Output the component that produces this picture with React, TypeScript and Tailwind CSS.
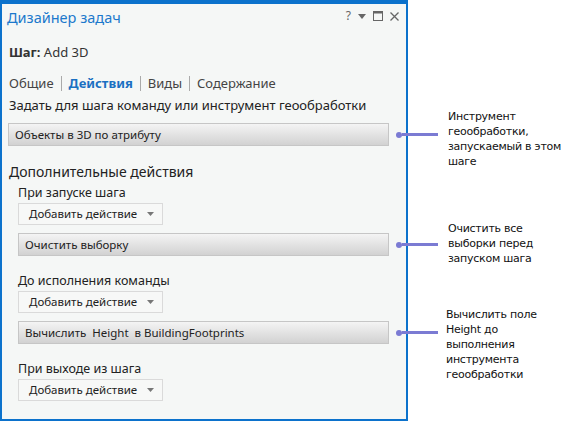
import { Fragment } from "react";

const ui = { fontFamily: '"Noto Sans", "Open Sans", sans-serif' };
const note = { fontFamily: '"DejaVu Sans", Verdana, sans-serif' };

function Connector() {
  // callout line that runs from the bar out to the note
  return (
    <div className="absolute left-full top-1/2 ml-[7px] flex w-[42px] -translate-y-1/2 items-center">
      <span className="h-[6px] w-[6px] rounded-full bg-[#7b7bd3]" />
      <span className="h-[3px] flex-1 bg-[#7b7bd3]" />
    </div>
  );
}

function Bar({ children, indent }: { children: React.ReactNode; indent?: boolean }) {
  return (
    <div className={`relative ${indent ? "ml-[16px]" : "ml-[6px]"} mr-[17px]`}>
      <div className="flex h-[23px] items-center border border-[#c6c6c6] bg-gradient-to-b from-[#f4f4f4] to-[#d2d2d2] px-[6px] text-[11.5px] text-[#222]">
        {children}
      </div>
      <Connector />
    </div>
  );
}

function AddAction() {
  return (
    <div className="ml-[16px] mt-[2px] flex h-[22px] w-[145px] items-center justify-between border border-[#dadada] bg-[#f7f8f7] pl-[10px] pr-[8px] text-[11.5px] text-[#222]">
      <span>Добавить действие</span>
      <svg width="7" height="4" viewBox="0 0 7 4">
        <path d="M0 0h7L3.5 4z" fill="#777" />
      </svg>
    </div>
  );
}

function SubLabel({ children }: { children: React.ReactNode }) {
  return <div className="ml-[16px] text-[12.5px] leading-[16px] text-[#222]">{children}</div>;
}

export default function App() {
  const tabs = ["Общие", "Действия", "Виды", "Содержание"];
  return (
    <div className="relative h-[423px] w-[573px] overflow-hidden bg-white" style={ui}>
      <div className="flex h-[421px] w-[408px] flex-col border-x-2 border-b-2 border-t-4 border-[#0c72cc] bg-[#f5f7f6]">
        <div className="flex items-start justify-between pl-[5px] pr-[7px] pt-[2px]">
          <div className="text-[14.5px] leading-[22px] text-[#1c79cc]">Дизайнер задач</div>
          <div className="mt-[3px] flex items-center gap-[7px] text-[#666]">
            <span className="text-[12px] leading-[14px]">?</span>
            <svg width="8" height="5" viewBox="0 0 8 5">
              <path d="M0 0h8L4 5z" fill="#666" />
            </svg>
            <svg width="10" height="10" viewBox="0 0 10 10">
              <rect x="0.5" y="0.5" width="9" height="9" fill="none" stroke="#666" />
              <rect x="0.5" y="0.5" width="9" height="2" fill="#666" />
            </svg>
            <svg width="9" height="9" viewBox="0 0 9 9">
              <path d="M0.5 0.5l8 8M8.5 0.5l-8 8" stroke="#666" strokeWidth="1.3" />
            </svg>
          </div>
        </div>

        <div className="ml-[7px] mt-[15px] text-[13px] leading-[18px] text-[#333]">
          <span className="font-bold">Шаг:</span> Add 3D
        </div>

        <div className="ml-[7px] mt-[13px] flex items-center text-[13px] leading-[18px] text-[#444]">
          {tabs.map((t, i) => (
            <Fragment key={t}>
              {i > 0 && <span className="mx-[7px] h-[15px] w-px bg-[#aaa]" />}
              <span className={i === 1 ? "font-bold text-[#1a70c2]" : ""}>{t}</span>
            </Fragment>
          ))}
        </div>

        <div className="ml-[7px] mt-[4px] text-[13px] leading-[18px] text-[#222]">
          Задать для шага команду или инструмент геообработки
        </div>
        <div className="mt-[9px]">
          <Bar>Объекты в 3D по атрибуту</Bar>
        </div>

        <div className="ml-[7px] mt-[16px] text-[14px] leading-[20px] text-[#222]">Дополнительные действия</div>
        <div className="mt-[3px]">
          <SubLabel>При запуске шага</SubLabel>
          <AddAction />
          <div className="mt-[8px]">
            <Bar indent>Очистить выборку</Bar>
          </div>
        </div>

        <div className="mt-[17px]">
          <SubLabel>До исполнения команды</SubLabel>
          <AddAction />
          <div className="mt-[8px]">
            <Bar indent>
              Вычислить&nbsp;&nbsp;Height&nbsp;&nbsp;в BuildingFootprints
            </Bar>
          </div>
        </div>

        <div className="mt-[17px]">
          <SubLabel>При выходе из шага</SubLabel>
          <AddAction />
        </div>
      </div>

      {/* callout notes */}
      <div className="absolute left-[448px] top-[109px] text-[11px] leading-[15px] tracking-[-0.25px] text-[#111]" style={note}>
        Инструмент<br />геообработки,<br />запускаемый в этом<br />шаге
      </div>
      <div className="absolute left-[448px] top-[221px] text-[11px] leading-[15px] tracking-[-0.25px] text-[#111]" style={note}>
        Очистить все<br />выборки перед<br />запуском шага
      </div>
      <div className="absolute left-[446px] top-[307px] text-[11px] leading-[15px] tracking-[-0.25px] text-[#111]" style={note}>
        Вычислить поле<br />Height до<br />выполнения<br />инструмента<br />геообработки
      </div>
    </div>
  );
}
